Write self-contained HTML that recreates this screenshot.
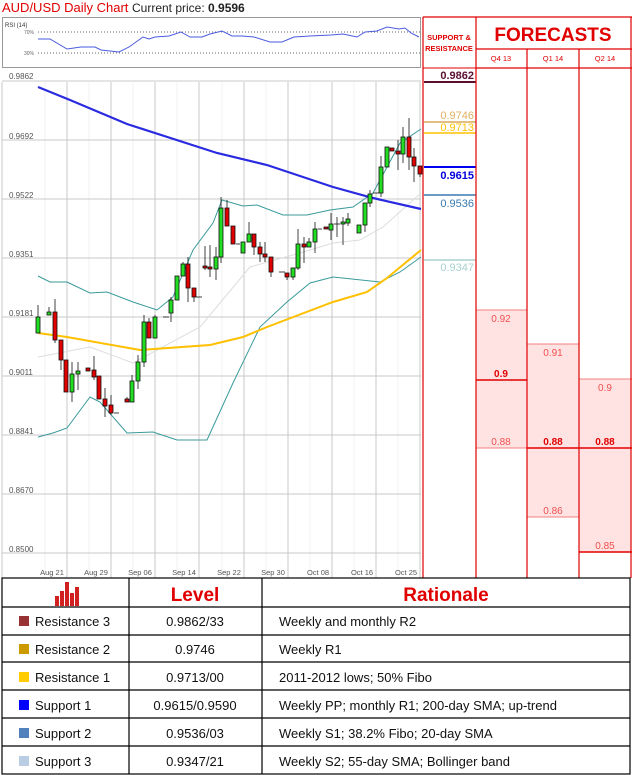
<!DOCTYPE html>
<html><head><meta charset="utf-8"><style>
html,body{margin:0;padding:0;background:#fff;}
svg{display:block;font-family:"Liberation Sans",sans-serif;}
</style></head><body>
<svg width="632" height="775" viewBox="0 0 632 775" xmlns="http://www.w3.org/2000/svg">
<!-- title -->
<text x="2" y="12" font-size="13" fill="#e00000">AUD/USD Daily Chart</text>
<text x="132" y="12" font-size="12" fill="#222">Current price: <tspan font-weight="bold">0.9596</tspan></text>

<!-- RSI box -->
<rect x="2.5" y="17.5" width="418" height="50" fill="#fff" stroke="#999"/>
<text x="5" y="27" font-size="6" fill="#333">RSI (14)</text>
<text x="24" y="34" font-size="5" fill="#666">70%</text>
<text x="24" y="55" font-size="5" fill="#666">30%</text>
<line x1="38" y1="32" x2="420" y2="32" stroke="#666" stroke-dasharray="1,2"/>
<line x1="38" y1="53" x2="420" y2="53" stroke="#666" stroke-dasharray="1,2"/>
<polyline fill="none" stroke="#4a5ae0" stroke-width="1" points="38,39 50,39 67,49 81,47 95,47 101,50 119,52 129,47 143,37 149,39 155,37 169,36 181,32 190,37 202,37 210,34 222,31 232,36 242,36 254,37 270,42 282,42 294,37 310,36 331,35 343,34 357,37 365,32 377,31 387,27 399,29 405,28 411,33 419,37"/>

<!-- chart grid -->
<g stroke="#f0f0f0">
<line x1="45" y1="82" x2="45" y2="578"/><line x1="89" y1="82" x2="89" y2="578"/><line x1="133" y1="82" x2="133" y2="578"/><line x1="177" y1="82" x2="177" y2="578"/><line x1="222" y1="82" x2="222" y2="578"/><line x1="266" y1="82" x2="266" y2="578"/><line x1="310" y1="82" x2="310" y2="578"/><line x1="354" y1="82" x2="354" y2="578"/><line x1="398" y1="82" x2="398" y2="578"/>
</g>
<g stroke="#c8c8c8">
<line x1="2" y1="82" x2="2" y2="578"/>
<line x1="67" y1="82" x2="67" y2="578"/><line x1="111" y1="82" x2="111" y2="578"/><line x1="155" y1="82" x2="155" y2="578"/><line x1="199" y1="82" x2="199" y2="578"/><line x1="244" y1="82" x2="244" y2="578"/><line x1="288" y1="82" x2="288" y2="578"/><line x1="332" y1="82" x2="332" y2="578"/><line x1="376" y1="82" x2="376" y2="578"/><line x1="420" y1="82" x2="420" y2="578"/>
<line x1="2" y1="81" x2="421" y2="81"/><line x1="2" y1="140" x2="421" y2="140"/><line x1="2" y1="199" x2="421" y2="199"/><line x1="2" y1="258" x2="421" y2="258"/><line x1="2" y1="317" x2="421" y2="317"/><line x1="2" y1="376" x2="421" y2="376"/><line x1="2" y1="435" x2="421" y2="435"/><line x1="2" y1="494" x2="421" y2="494"/><line x1="2" y1="553" x2="421" y2="553"/>
</g>
<g font-size="8" fill="#555">
<text x="9" y="79">0.9862</text><text x="9" y="139">0.9692</text><text x="9" y="198">0.9522</text><text x="9" y="257">0.9351</text><text x="9" y="316">0.9181</text><text x="9" y="375">0.9011</text><text x="9" y="434">0.8841</text><text x="9" y="493">0.8670</text><text x="9" y="552">0.8500</text>
</g>
<g font-size="7.5" fill="#555" text-anchor="middle">
<text x="52" y="575">Aug 21</text><text x="96" y="575">Aug 29</text><text x="140" y="575">Sep 06</text><text x="184" y="575">Sep 14</text><text x="229" y="575">Sep 22</text><text x="273" y="575">Sep 30</text><text x="318" y="575">Oct 08</text><text x="362" y="575">Oct 16</text><text x="406" y="575">Oct 25</text>
</g>

<!-- indicator lines -->
<polyline fill="none" stroke="#ddd" stroke-width="1" points="38,357 90,347 133,363 200,327 250,267 300,253 333,243 360,240 383,227 421,193"/>
<polyline fill="none" stroke="#3a9a9a" stroke-width="1" points="38,276 50,282 67,282 90,293 107,292 133,302 157,310 173,297 193,250 213,223 222,200 243,206 257,205 283,215 307,215 330,210 353,207 373,193 400,143 421,129"/>
<polyline fill="none" stroke="#3a9a9a" stroke-width="1" points="38,437 53,433 67,428 90,397 100,402 127,433 153,432 177,440 207,440 233,383 260,327 287,302 310,283 333,277 380,282 400,272 421,257"/>
<polyline fill="none" stroke="#ffc000" stroke-width="2" points="38,333 67,337 140,350 210,345 243,337 267,327 333,302 367,292 387,278 421,250"/>
<polyline fill="none" stroke="#2a2ae0" stroke-width="2.2" points="38,87 70,100 127,124 217,153 267,165 333,187 373,198 421,209"/>

<!-- candles -->
<g stroke="#111" stroke-width="0.8">
<line x1="38" y1="305" x2="38" y2="333"/><rect x="36" y="317" width="4" height="16" fill="#22dd22"/>
<line x1="49" y1="307" x2="49" y2="315"/><rect x="47" y="312" width="4" height="3" fill="#22dd22"/>
<line x1="55" y1="299" x2="55" y2="343"/><rect x="53" y="312" width="4" height="28" fill="#e00000"/>
<line x1="61" y1="340" x2="61" y2="370"/><rect x="59" y="340" width="4" height="20" fill="#e00000"/>
<line x1="66" y1="360" x2="66" y2="392"/><rect x="64" y="360" width="4" height="32" fill="#e00000"/>
<line x1="72" y1="362" x2="72" y2="402"/><rect x="70" y="374" width="4" height="18" fill="#22dd22"/>
<line x1="78" y1="362" x2="78" y2="390"/><rect x="76" y="371" width="4" height="3" fill="#22dd22"/>
<line x1="88" y1="368" x2="88" y2="371"/><rect x="86" y="368" width="4" height="3" fill="#e00000"/>
<line x1="94" y1="356" x2="94" y2="380"/><rect x="92" y="370" width="4" height="7" fill="#e00000"/>
<line x1="99" y1="376" x2="99" y2="399"/><rect x="97" y="376" width="4" height="23" fill="#e00000"/>
<line x1="105" y1="388" x2="105" y2="417"/><rect x="103" y="399" width="4" height="7" fill="#e00000"/>
<line x1="111" y1="395" x2="111" y2="415"/><rect x="109" y="405" width="4" height="8" fill="#e00000"/>
<line x1="114" y1="413" x2="119" y2="413"/>
<line x1="127" y1="397" x2="127" y2="402"/><rect x="125" y="399" width="4" height="3" fill="#e00000"/>
<line x1="132" y1="375" x2="132" y2="402"/><rect x="130" y="381" width="4" height="21" fill="#22dd22"/>
<line x1="138" y1="355" x2="138" y2="389"/><rect x="136" y="362" width="4" height="19" fill="#22dd22"/>
<line x1="144" y1="315" x2="144" y2="367"/><rect x="142" y="322" width="4" height="40" fill="#22dd22"/>
<line x1="149" y1="318" x2="149" y2="338"/><rect x="147" y="322" width="4" height="16" fill="#e00000"/>
<line x1="155" y1="315" x2="155" y2="338"/><rect x="153" y="317" width="4" height="21" fill="#22dd22"/>
<line x1="163" y1="317" x2="169" y2="317"/>
<line x1="171" y1="297" x2="171" y2="322"/><rect x="169" y="300" width="4" height="13" fill="#22dd22"/>
<line x1="177" y1="276" x2="177" y2="300"/><rect x="175" y="276" width="4" height="24" fill="#22dd22"/>
<line x1="183" y1="262" x2="183" y2="276"/><rect x="181" y="264" width="4" height="12" fill="#22dd22"/>
<line x1="188" y1="257" x2="188" y2="302"/><rect x="186" y="264" width="4" height="24" fill="#e00000"/>
<line x1="194" y1="288" x2="194" y2="302"/><rect x="192" y="288" width="4" height="9" fill="#e00000"/>
<line x1="196" y1="297" x2="202" y2="297"/>
<line x1="205" y1="246" x2="205" y2="270"/><rect x="203" y="266" width="4" height="2" fill="#e00000"/>
<line x1="210" y1="245" x2="210" y2="277"/><rect x="208" y="267" width="4" height="2" fill="#e00000"/>
<line x1="216" y1="247" x2="216" y2="280"/><rect x="214" y="257" width="4" height="12" fill="#22dd22"/>
<line x1="221" y1="197" x2="221" y2="263"/><rect x="219" y="208" width="4" height="49" fill="#22dd22"/>
<line x1="227" y1="200" x2="227" y2="226"/><rect x="225" y="208" width="4" height="18" fill="#e00000"/>
<line x1="233" y1="226" x2="233" y2="244"/><rect x="231" y="226" width="4" height="18" fill="#e00000"/>
<line x1="236" y1="244" x2="240" y2="244"/>
<line x1="243" y1="242" x2="243" y2="253"/><rect x="241" y="242" width="4" height="11" fill="#22dd22"/>
<line x1="249" y1="222" x2="249" y2="242"/><rect x="247" y="234" width="4" height="8" fill="#22dd22"/>
<line x1="254" y1="234" x2="254" y2="255"/><rect x="252" y="234" width="4" height="13" fill="#e00000"/>
<line x1="260" y1="242" x2="260" y2="262"/><rect x="258" y="247" width="4" height="7" fill="#e00000"/>
<line x1="265" y1="242" x2="265" y2="262"/><rect x="263" y="254" width="4" height="3" fill="#e00000"/>
<line x1="271" y1="257" x2="271" y2="277"/><rect x="269" y="257" width="4" height="15" fill="#e00000"/>
<line x1="279" y1="272" x2="285" y2="272"/>
<line x1="287" y1="273" x2="287" y2="280"/><rect x="285" y="273" width="4" height="4" fill="#e00000"/>
<line x1="293" y1="268" x2="293" y2="280"/><rect x="291" y="268" width="4" height="9" fill="#22dd22"/>
<line x1="298" y1="229" x2="298" y2="270"/><rect x="296" y="244" width="4" height="24" fill="#22dd22"/>
<line x1="304" y1="237" x2="304" y2="263"/><rect x="302" y="244" width="4" height="3" fill="#e00000"/>
<line x1="309" y1="238" x2="309" y2="247"/><rect x="307" y="242" width="4" height="5" fill="#22dd22"/>
<line x1="315" y1="222" x2="315" y2="253"/><rect x="313" y="229" width="4" height="13" fill="#22dd22"/>
<line x1="318" y1="229" x2="322" y2="229"/>
<line x1="326" y1="227" x2="326" y2="229"/><rect x="324" y="227" width="4" height="2" fill="#e00000"/>
<line x1="331" y1="213" x2="331" y2="240"/><rect x="329" y="224" width="4" height="6" fill="#22dd22"/>
<line x1="337" y1="217" x2="337" y2="237"/><line x1="334" y1="224" x2="340" y2="224"/>
<line x1="343" y1="217" x2="343" y2="245"/><rect x="341" y="222" width="4" height="2" fill="#22dd22"/>
<line x1="348" y1="213" x2="348" y2="226"/><rect x="346" y="219" width="4" height="4" fill="#22dd22"/>
<line x1="359" y1="225" x2="359" y2="233"/><rect x="357" y="225" width="4" height="8" fill="#22dd22"/>
<line x1="365" y1="203" x2="365" y2="232"/><rect x="363" y="203" width="4" height="22" fill="#22dd22"/>
<line x1="370" y1="190" x2="370" y2="207"/><rect x="368" y="194" width="4" height="9" fill="#22dd22"/>
<line x1="373" y1="193" x2="379" y2="193"/>
<line x1="381" y1="156" x2="381" y2="197"/><rect x="379" y="167" width="4" height="26" fill="#22dd22"/>
<line x1="387" y1="147" x2="387" y2="167"/><rect x="385" y="147" width="4" height="20" fill="#22dd22"/>
<line x1="392" y1="148" x2="392" y2="151"/><rect x="390" y="148" width="4" height="3" fill="#e00000"/>
<line x1="398" y1="140" x2="398" y2="170"/><rect x="396" y="151" width="4" height="3" fill="#e00000"/>
<line x1="403" y1="127" x2="403" y2="163"/><rect x="401" y="137" width="4" height="17" fill="#22dd22"/>
<line x1="409" y1="118" x2="409" y2="170"/><rect x="407" y="137" width="4" height="20" fill="#e00000"/>
<line x1="414" y1="148" x2="414" y2="182"/><rect x="412" y="157" width="4" height="9" fill="#e00000"/>
<line x1="420" y1="166" x2="420" y2="177"/><rect x="418" y="166" width="4" height="8" fill="#e00000"/>
</g>

<!-- S&R column -->
<line x1="423" y1="17" x2="423" y2="578" stroke="#e00000" stroke-width="1.2"/>
<line x1="423" y1="68" x2="476" y2="68" stroke="#e00000"/>
<text x="449" y="40" font-size="7.5" font-weight="bold" fill="#e00000" text-anchor="middle">SUPPORT &amp;</text>
<text x="449" y="51" font-size="7.5" font-weight="bold" fill="#e00000" text-anchor="middle">RESISTANCE</text>
<g font-size="11" text-anchor="end">
<text x="474" y="79" fill="#5a1030" font-weight="bold">0.9862</text>
<line x1="424" y1="82" x2="476" y2="82" stroke="#5a1030" stroke-width="2"/>
<text x="474" y="119" fill="#e0b060">0.9746</text>
<line x1="424" y1="122" x2="476" y2="122" stroke="#d8a858" stroke-width="1.5"/>
<text x="474" y="131" fill="#ffc000">0.9713</text>
<line x1="424" y1="133" x2="476" y2="133" stroke="#ffc000" stroke-width="1.5"/>
<line x1="424" y1="167" x2="476" y2="167" stroke="#0000ee" stroke-width="2"/>
<text x="474" y="179" fill="#0000dd" font-weight="bold">0.9615</text>
<line x1="424" y1="195" x2="476" y2="195" stroke="#3a7ab0" stroke-width="1.5"/>
<text x="474" y="207" fill="#3a7ab0">0.9536</text>
<line x1="424" y1="260" x2="476" y2="260" stroke="#a8d0d0" stroke-width="1.5"/>
<text x="474" y="271" fill="#a8d0d0">0.9347</text>
</g>

<!-- Forecasts -->
<rect x="527" y="344" width="52" height="173" fill="#ffe2e2"/>
<rect x="476" y="310" width="51" height="138" fill="#ffe2e2"/>
<rect x="579" y="379" width="52" height="173" fill="#ffe2e2"/>
<g stroke="#f08080">
<line x1="476" y1="310" x2="527" y2="310"/><line x1="476" y1="448" x2="527" y2="448"/>
<line x1="527" y1="344" x2="579" y2="344"/><line x1="527" y1="517" x2="579" y2="517"/>
<line x1="579" y1="379" x2="632" y2="379"/>
</g>
<g stroke="#e00000" stroke-width="1.5">
<line x1="476" y1="380" x2="527" y2="380"/>
<line x1="527" y1="448" x2="632" y2="448"/>
<line x1="579" y1="552" x2="632" y2="552"/>
</g>
<g stroke="#e00000" stroke-width="1.2">
<line x1="476" y1="17" x2="476" y2="578"/>
<line x1="527" y1="49" x2="527" y2="578"/>
<line x1="579" y1="49" x2="579" y2="578"/>
<line x1="631" y1="17" x2="631" y2="578"/>
<line x1="423" y1="17" x2="632" y2="17"/>
<line x1="476" y1="49" x2="632" y2="49"/>
<line x1="476" y1="68" x2="632" y2="68"/>
</g>
<text x="553" y="41" font-size="19" font-weight="bold" fill="#e00000" text-anchor="middle">FORECASTS</text>
<g font-size="7.5" fill="#e00000" text-anchor="middle">
<text x="501" y="61">Q4 13</text><text x="553" y="61">Q1 14</text><text x="605" y="61">Q2 14</text>
</g>
<g font-size="10" fill="#f05050" text-anchor="middle">
<text x="501" y="322">0.92</text><text x="501" y="445">0.88</text>
<text x="553" y="356">0.91</text><text x="553" y="514">0.86</text>
<text x="605" y="391">0.9</text><text x="605" y="549">0.85</text>
</g>
<g font-size="10" fill="#e00000" font-weight="bold" text-anchor="middle">
<text x="501" y="377">0.9</text><text x="553" y="445">0.88</text><text x="605" y="445">0.88</text>
</g>

<!-- bottom table -->
<g stroke="#000" stroke-width="1.2" fill="none">
<rect x="2" y="578" width="628" height="196"/>
<line x1="129" y1="578" x2="129" y2="774"/><line x1="262" y1="578" x2="262" y2="774"/>
<line x1="2" y1="607" x2="630" y2="607"/><line x1="2" y1="635" x2="630" y2="635"/><line x1="2" y1="662" x2="630" y2="662"/><line x1="2" y1="690" x2="630" y2="690"/><line x1="2" y1="718" x2="630" y2="718"/><line x1="2" y1="746" x2="630" y2="746"/>
</g>
<g fill="#d02020">
<rect x="55" y="596" width="4" height="10"/><rect x="60" y="591" width="4" height="15"/><rect x="65" y="582" width="4" height="24"/><rect x="70" y="593" width="4" height="13"/><rect x="75" y="587" width="4" height="19"/>
</g>
<text x="195" y="601" font-size="19" font-weight="bold" fill="#e00000" text-anchor="middle">Level</text>
<text x="446" y="601" font-size="19" font-weight="bold" fill="#e00000" text-anchor="middle">Rationale</text>
<rect x="19" y="616" width="10" height="10" fill="#993333"/>
<rect x="19" y="644" width="10" height="10" fill="#cc9900"/>
<rect x="19" y="672" width="10" height="10" fill="#ffcc00"/>
<rect x="19" y="700" width="10" height="10" fill="#0000ff"/>
<rect x="19" y="728" width="10" height="10" fill="#4f81bd"/>
<rect x="19" y="756" width="10" height="10" fill="#b8cce4"/>
<g font-size="13" fill="#111">
<text x="35" y="626">Resistance 3</text><text x="35" y="654">Resistance 2</text><text x="35" y="682">Resistance 1</text><text x="35" y="710">Support 1</text><text x="35" y="738">Support 2</text><text x="35" y="766">Support 3</text>
<text x="279" y="626">Weekly and monthly R2</text><text x="279" y="654">Weekly R1</text><text x="279" y="682">2011-2012 lows; 50% Fibo</text><text x="279" y="710">Weekly PP; monthly R1; 200-day SMA; up-trend</text><text x="279" y="738">Weekly S1; 38.2% Fibo; 20-day SMA</text><text x="279" y="766">Weekly S2; 55-day SMA; Bollinger band</text>
</g>
<g font-size="13" fill="#111" text-anchor="middle">
<text x="195" y="626">0.9862/33</text><text x="195" y="654">0.9746</text><text x="195" y="682">0.9713/00</text><text x="195" y="710">0.9615/0.9590</text><text x="195" y="738">0.9536/03</text><text x="195" y="766">0.9347/21</text>
</g>
</svg>
</body></html>
